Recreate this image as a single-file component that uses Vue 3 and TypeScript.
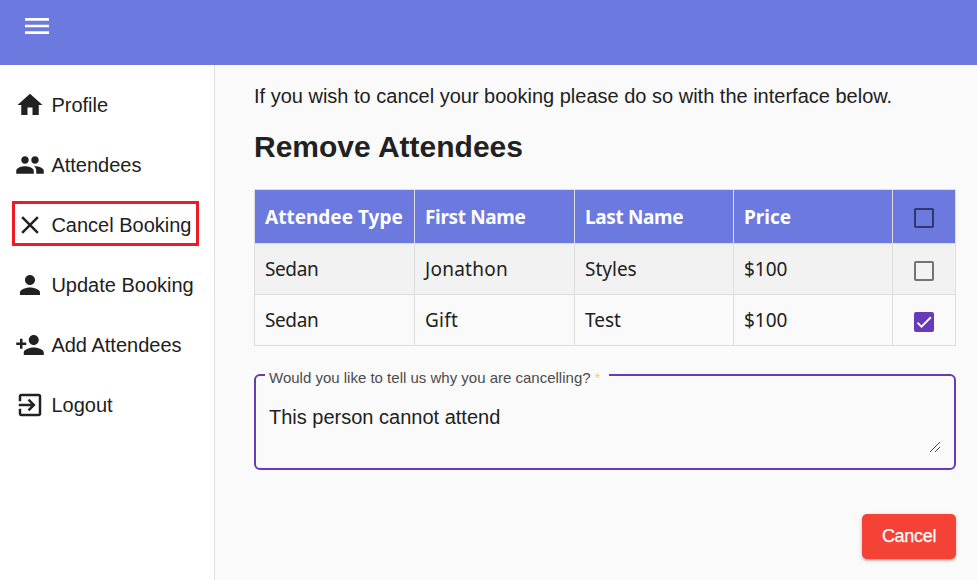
<script setup lang="ts">
import { ref } from 'vue'

interface NavItem { label: string; path: string; active?: boolean }
interface Attendee { type: string; first: string; last: string; price: string; selected: boolean }

const nav: NavItem[] = [
  { label: 'Profile', path: 'M10 20v-6h4v6h5v-8h3L12 3 2 12h3v8z' },
  { label: 'Attendees', path: 'M16 11c1.66 0 2.99-1.34 2.99-3S17.66 5 16 5s-3 1.34-3 3 1.34 3 3 3zm-8 0c1.66 0 2.99-1.34 2.99-3S9.66 5 8 5 5 6.34 5 8s1.34 3 3 3zm0 2c-2.33 0-7 1.17-7 3.5V19h14v-2.5c0-2.33-4.67-3.5-7-3.5zm8 0c-.29 0-.62.02-.97.05 1.16.84 1.97 1.97 1.97 3.45V19h6v-2.5c0-2.33-4.67-3.5-7-3.5z' },
  { label: 'Cancel Booking', path: 'M19 6.41L17.59 5 12 10.59 6.41 5 5 6.41 10.59 12 5 17.59 6.41 19 12 13.41 17.59 19 19 17.59 13.41 12z', active: true },
  { label: 'Update Booking', path: 'M12 12c2.21 0 4-1.79 4-4s-1.79-4-4-4-4 1.79-4 4 1.79 4 4 4zm0 2c-2.67 0-8 1.34-8 4v2h16v-2c0-2.66-5.33-4-8-4z' },
  { label: 'Add Attendees', path: 'M15 12c2.21 0 4-1.79 4-4s-1.79-4-4-4-4 1.79-4 4 1.79 4 4 4zm-9-2V7H4v3H1v2h3v3h2v-3h3v-2H6zm9 4c-2.67 0-8 1.34-8 4v2h16v-2c0-2.66-5.33-4-8-4z' },
  { label: 'Logout', path: 'M10.09 15.59L11.5 17l5-5-5-5-1.41 1.41L12.67 11H3v2h9.67l-2.58 2.59zM19 3H5c-1.11 0-2 .9-2 2v4h2V5h14v14H5v-4H3v4c0 1.1.89 2 2 2h14c1.1 0 2-.9 2-2V5c0-1.1-.9-2-2-2z' },
]

const attendees = ref<Attendee[]>([
  { type: 'Sedan', first: 'Jonathon', last: 'Styles', price: '$100', selected: false },
  { type: 'Sedan', first: 'Gift', last: 'Test', price: '$100', selected: true },
])
const reason = ref('This person cannot attend')
</script>

<template>
  <div class="app">
    <header class="toolbar">
      <button class="menu" aria-label="Menu">
        <svg viewBox="0 0 24 24"><path d="M3 18h18v-2H3v2zm0-5h18v-2H3v2zm0-7v2h18V6H3z" /></svg>
      </button>
    </header>
    <div class="body">
      <nav class="sidebar">
        <a v-for="item in nav" :key="item.label" class="nav-item" :class="{ active: item.active }">
          <svg viewBox="0 0 24 24"><path :d="item.path" /></svg>
          <span>{{ item.label }}</span>
        </a>
      </nav>
      <main class="content">
        <p class="intro">If you wish to cancel your booking please do so with the interface below.</p>
        <h1>Remove Attendees</h1>
        <table>
          <colgroup>
            <col class="c-type" /><col class="c-first" /><col class="c-last" /><col class="c-price" /><col class="c-check" />
          </colgroup>
          <thead>
            <tr>
              <th>Attendee Type</th>
              <th class="name">First Name</th>
              <th class="name">Last Name</th>
              <th>Price</th>
              <th class="check"><span class="box"></span></th>
            </tr>
          </thead>
          <tbody>
            <tr v-for="(a, i) in attendees" :key="i">
              <td class="type">{{ a.type }}</td>
              <td class="first">{{ a.first }}</td>
              <td>{{ a.last }}</td>
              <td>{{ a.price }}</td>
              <td class="check">
                <span class="box" :class="{ checked: a.selected }" @click="a.selected = !a.selected">
                  <svg v-if="a.selected" viewBox="0 0 24 24"><path d="M4.1 12.7 9 17.6 20.3 6.3" /></svg>
                </span>
              </td>
            </tr>
          </tbody>
        </table>
        <fieldset class="field">
          <legend>Would you like to tell us why you are cancelling? <span class="req">*</span></legend>
          <textarea v-model="reason" spellcheck="false"></textarea>
          <svg class="grip" viewBox="0 0 10 10"><path d="M0 10L10 0M5 10l5-5" /></svg>
        </fieldset>
        <div class="actions"><button class="cancel">Cancel</button></div>
      </main>
    </div>
  </div>
</template>

<style>
body { margin: 0; overflow: hidden; }
</style>

<style scoped>
* { box-sizing: border-box; }
.app { height: 580px; display: flex; flex-direction: column; overflow: hidden; font: 20px "Liberation Sans", Arial, sans-serif; color: #212121; background: #fafafa; }
.toolbar { height: 65px; flex: none; background: #6c79df; padding: 10px 21px; }
.menu { display: block; width: 32px; height: 32px; padding: 0; border: 0; background: none; }
.menu svg { display: block; width: 32px; height: 32px; fill: #fff; }
.body { flex: 1; display: flex; min-height: 0; }
.sidebar { width: 215px; flex: none; background: #fff; border-right: 1px solid #dedede; padding: 17px 0 0 12px; }
.nav-item { display: flex; align-items: center; width: 187px; height: 46px; margin-bottom: 14px; padding-left: 3px; gap: 6.4px; white-space: nowrap; }
.nav-item svg { width: 30px; height: 30px; flex: none; fill: #212121; }
.nav-item span { line-height: 24px; }
.nav-item.active { height: 45px; margin: -1px 0 16px; padding: 2px 0 0; border: 3px solid #ed1c24; }
.content { flex: 1; padding: 19px 21px 0 39px; }
.intro { margin: 0; line-height: 24px; white-space: nowrap; }
h1 { margin: 19px 0 0; font-size: 30px; line-height: 40px; font-weight: 700; }
table { margin-top: 22px; width: 702px; border-collapse: collapse; table-layout: fixed; font-family: "Noto Sans", sans-serif; font-size: 19px; }
.c-type, .c-first { width: 160px; }
.c-last, .c-price { width: 159px; }
.c-check { width: 63px; }
th, td { border: 1px solid #ddd; padding: 0 10px; text-align: left; line-height: 26px; white-space: nowrap; }
th { height: 54px; background: #6c79df; color: #fff; font-weight: 700; }
th.name { letter-spacing: -.35px; }
td { height: 51px; }
td.type { letter-spacing: -.4px; }
td.first { letter-spacing: .25px; }
tbody tr:nth-child(odd) { background: #f2f2f2; }
.check { padding: 0; }
.box { display: block; width: 20px; height: 20px; margin: 2px auto 0; border: 2px solid #737373; border-radius: 2px; }
td .box { margin-top: 4px; }
th .box { border-color: #313768; }
.box.checked { border: 0; background: #673ab7; }
.box svg { display: block; width: 20px; height: 20px; fill: none; stroke: #fafafa; stroke-width: 2.2; }
.field { position: relative; margin: 23px 0 0; height: 101px; padding: 0 14px 0 13px; border: 2px solid #673ab7; border-radius: 6px; }
legend { margin-left: -4px; padding: 0 8px 0 4px; width: 344px; height: 12px; font-size: 15px; line-height: 17px; color: #4c4c4c; white-space: nowrap; }
.req { color: #ffd04f; }
textarea { display: block; width: 100%; height: 56px; margin-top: 24px; padding: 0; border: 0; outline: 0; background: none; resize: none; color: inherit; font: inherit; line-height: 24px; }
.grip { position: absolute; right: 14px; bottom: 16px; width: 10px; height: 10px; fill: none; stroke: #444; stroke-width: 1; }
.actions { display: flex; justify-content: flex-end; margin-top: 44px; }
.cancel { width: 94px; height: 45px; border: 0; border-radius: 5px; background: #f44336; color: #fff; font: 18px "Liberation Sans", Arial, sans-serif; letter-spacing: -.3px; -webkit-text-stroke: .25px #fff; box-shadow: 0 3px 2px -2px rgba(0,0,0,.2), 0 2px 3px rgba(0,0,0,.14), 0 1px 5px rgba(0,0,0,.12); padding: 0; }
</style>
